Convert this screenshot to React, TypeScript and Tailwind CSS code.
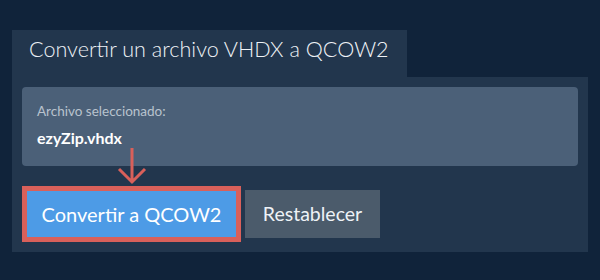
import React from 'react';

export default function App() {
  return (
    <div className="w-[600px] h-[280px] bg-[#10233a] pt-[30px] px-3 font-['Lato',sans-serif]">
      <div className="w-[395px] h-[47px] bg-[#22364d] flex items-center pl-[17px] pb-[7px]">
        <h1 className="text-[21.6px] font-light text-[#eef2f6] leading-none">Convertir un archivo VHDX a QCOW2</h1>
      </div>
      <div className="w-[576px] bg-[#22364d] p-[10px]">
        <div className="h-[79px] rounded bg-[#4b6078] px-[15px] pt-[18px]">
          <p className="text-[13.5px] leading-none text-[#b9c3ce]">Archivo seleccionado:</p>
          <p className="mt-[11px] text-[16px] leading-none font-bold text-white">ezyZip.vhdx</p>
        </div>
        <div className="relative mt-[20px] flex items-center gap-1">
          {/* arrow pointing at the convert button */}
          <svg className="absolute left-[95px] -top-[39px]" width="30" height="38" viewBox="0 0 30 38" fill="none">
            <path d="M15 1 V35 M2 22 L15 35 L28 22" stroke="#d9605a" strokeWidth="3" />
          </svg>
          <button className="w-[219px] h-[56px] border-[5px] border-[#d9605a] bg-[#4d9be6] text-white text-[20px]">
            Convertir a QCOW2
          </button>
          <button className="w-[135px] h-[48px] bg-[#4b5b6b] text-[#eef2f6] text-[19.5px]">
            Restablecer
          </button>
        </div>
      </div>
    </div>
  );
}
